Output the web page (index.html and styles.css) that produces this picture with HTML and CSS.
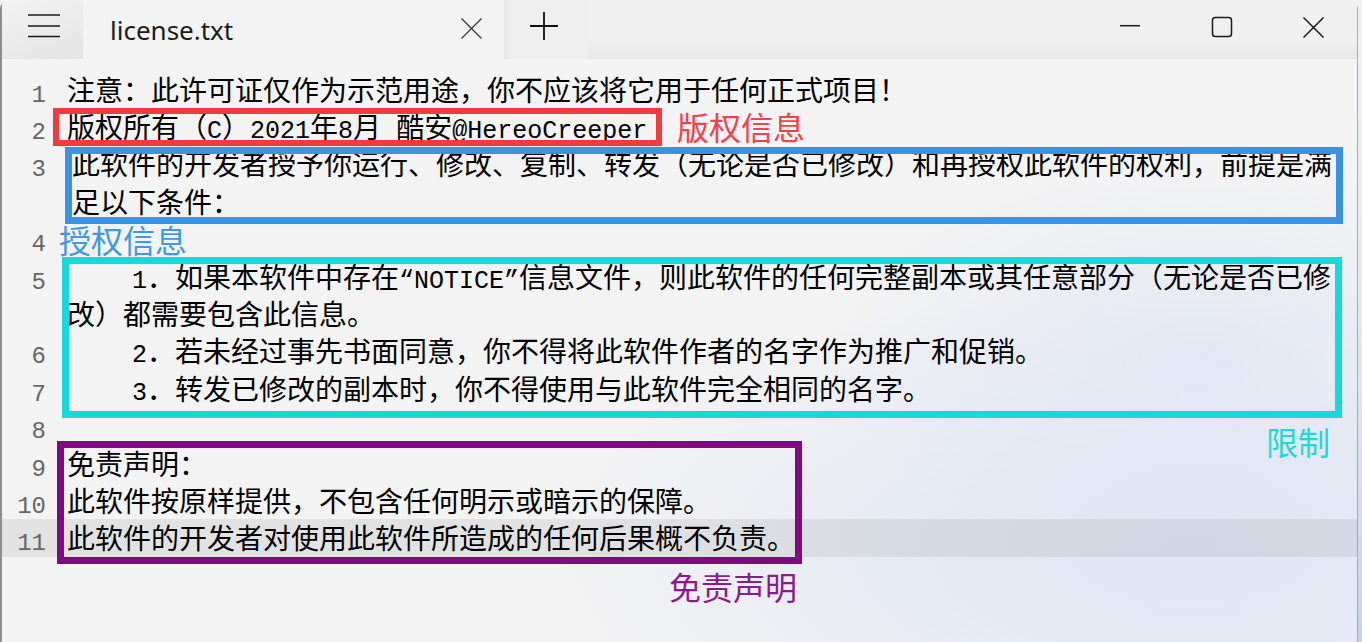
FILE: index.html
```html
<!DOCTYPE html>
<html lang="zh-CN">
<head>
<meta charset="utf-8">
<title>license.txt</title>
<link rel="stylesheet" href="styles.css">
</head>
<body>
<div class="window">
  <header class="titlebar">
    <div class="menu-btn">
      <svg width="32" height="32" viewBox="0 0 32 32"><path d="M0 5H32M0 16H32M0 26.5H32" stroke="#1b1b1b" stroke-width="1.5" fill="none"/></svg>
    </div>
    <div class="tab">
      <span class="tab-title">license.txt</span>
      <svg class="tab-close" width="21" height="21" viewBox="0 0 21 21"><path d="M0.5 0.5L20.5 20.5M20.5 0.5L0.5 20.5" stroke="#3a3a3a" stroke-width="1.3" fill="none"/></svg>
    </div>
    <div class="new-tab">
      <svg width="28" height="28" viewBox="0 0 28 28"><path d="M14 0V28M0 14H28" stroke="#111" stroke-width="1.8" fill="none"/></svg>
    </div>
    <div class="drag"></div>
    <div class="cap-btn">
      <svg width="26" height="22" viewBox="0 0 26 22"><path d="M4 9.7H24" stroke="#1b1b1b" stroke-width="1.5" fill="none"/></svg>
    </div>
    <div class="cap-btn">
      <svg width="26" height="22" viewBox="0 0 26 22"><rect x="4.5" y="1.5" width="19" height="19" rx="2.8" stroke="#1b1b1b" stroke-width="1.5" fill="none"/></svg>
    </div>
    <div class="cap-btn">
      <svg width="26" height="22" viewBox="0 0 26 22"><path d="M3.5 1.5L23.5 21.5M23.5 1.5L3.5 21.5" stroke="#1b1b1b" stroke-width="1.5" fill="none"/></svg>
    </div>
  </header>

  <main class="editor">
    <div class="lines">
      <div class="line"><span class="ln">1</span><p class="txt">注意：此许可证仅作为示范用途，你不应该将它用于任何正式项目！</p></div>
      <div class="line"><span class="ln">2</span><p class="txt">版权所有（<span class="m">C</span>）<span class="m">2021</span>年<span class="m">8</span>月<span class="m"> </span>酷安<span class="m">@HereoCreeper</span></p></div>
      <div class="line"><span class="ln">3</span><p class="txt shift">此软件的开发者授予你运行、修改、复制、转发（无论是否已修改）和再授权此软件的权利，前提是满足以下条件：</p></div>
      <div class="line"><span class="ln">4</span><p class="txt"><br></p></div>
      <div class="line"><span class="ln">5</span><p class="txt"><span class="ind"></span><span class="m">1</span>．如果本软件中存在<span class="m">“NOTICE”</span>信息文件，则此软件的任何完整副本或其任意部分（无论是否已修改）都需要包含此信息。</p></div>
      <div class="line"><span class="ln">6</span><p class="txt"><span class="ind"></span><span class="m">2</span>．若未经过事先书面同意，你不得将此软件作者的名字作为推广和促销。</p></div>
      <div class="line"><span class="ln">7</span><p class="txt"><span class="ind"></span><span class="m">3</span>．转发已修改的副本时，你不得使用与此软件完全相同的名字。</p></div>
      <div class="line"><span class="ln">8</span><p class="txt"><br></p></div>
      <div class="line"><span class="ln">9</span><p class="txt">免责声明：</p></div>
      <div class="line"><span class="ln">10</span><p class="txt">此软件按原样提供，不包含任何明示或暗示的保障。</p></div>
      <div class="line current"><span class="ln">11</span><p class="txt">此软件的开发者对使用此软件所造成的任何后果概不负责。</p></div>
    </div>

    <div class="box box-red"></div>
    <div class="box box-blue"></div>
    <div class="box box-cyan"></div>
    <div class="box box-purple"></div>

    <span class="label label-red">版权信息</span>
    <span class="label label-blue">授权信息</span>
    <span class="label label-cyan">限制</span>
    <span class="label label-purple">免责声明</span>
  </main>
</div>
</body>
</html>
```

FILE: styles.css
```css
* { box-sizing: border-box; }

html, body {
  margin: 0;
  padding: 0;
}

body {
  width: 1362px;
  height: 642px;
  overflow: hidden;
  background: linear-gradient(#f2f2f2 0%, #e4e7ee 55%, #c8d2ea 100%);
  font-family: "Noto Sans", sans-serif;
}

.window {
  position: relative;
  width: 1358px;
  height: 642px;
  display: flex;
  flex-direction: column;
  border-radius: 9px 9px 0 0;
  overflow: hidden;
  background: #f3f3f3;
}

.window::before,
.window::after {
  content: "";
  position: absolute;
  top: 0;
  bottom: 0;
  z-index: 5;
  pointer-events: none;
}

.window::before {
  left: 0;
  width: 2px;
  background: #8d8d8d;
  border-top-left-radius: 9px;
}

.window::after {
  right: 0;
  width: 1px;
  background: #a9a9a9;
}

/* ---------- title bar ---------- */
.titlebar {
  flex: none;
  height: 59px;
  display: flex;
  background: linear-gradient(#f0f0f0 68%, #e7e7e7 100%);
}

.menu-btn {
  flex: none;
  width: 83px;
  padding: 10px 0 0 28px;
  background: linear-gradient(160deg, #f2f2f2 0%, #e8e8e8 70%, #e3e3e3 100%);
}

.menu-btn svg,
.new-tab svg,
.cap-btn svg {
  display: block;
}

.tab {
  flex: none;
  width: 421px;
  display: flex;
  align-items: center;
  justify-content: space-between;
  padding: 0 22px 0 27px;
  background: #f3f3f3;
}

.tab-title {
  font-family: "Noto Sans", "Open Sans", sans-serif;
  font-size: 26px;
  line-height: 26px;
  color: #1b1b1b;
}

.tab-close {
  display: block;
  margin-top: -2px;
}

.new-tab {
  flex: none;
  width: 84px;
  padding: 12px 0 0 26px;
  background: linear-gradient(90deg, #e6e6e6 0%, #efefef 10%, #efefef 100%);
}

.drag {
  flex: 1;
}

.cap-btn {
  flex: none;
  width: 92px;
  padding: 16px 0 0 34px;
}

/* ---------- editor ---------- */
.editor {
  position: relative;
  flex: 1;
  overflow: hidden;
  padding-top: 11.5px;
  background:
    radial-gradient(ellipse 640px 270px at 1190px 490px, #e0e6f3 0%, rgba(224, 230, 243, 0.75) 40%, rgba(243, 243, 243, 0) 100%),
    radial-gradient(ellipse 380px 200px at 1200px 300px, rgba(226, 231, 243, 0.9) 0%, rgba(243, 243, 243, 0) 100%),
    #f3f3f3;
}

.line {
  display: flex;
  align-items: flex-start;
}

.line.current {
  background: rgba(0, 0, 0, 0.065);
}

.ln {
  flex: none;
  width: 46px;
  height: 37.4px;
  margin-right: 21px;
  text-align: right;
  font-family: "Liberation Mono", monospace;
  font-size: 24px;
  line-height: 49px;
  color: #666666;
}

.txt {
  margin: 0;
  width: 1278px;
  font-family: "Noto Sans CJK SC", "Noto Sans", sans-serif;
  font-size: 28px;
  line-height: 37.4px;
  color: #000;
  white-space: pre-wrap;
  text-spacing-trim: space-all;
}

.txt.shift {
  padding-left: 5px;
}

.m {
  font-family: "Liberation Mono", monospace;
  font-size: 25px;
  line-height: 1;
}

.ind {
  display: inline-block;
  width: 65px;
}

/* ---------- annotations ---------- */
.box {
  position: absolute;
  border-style: solid;
  pointer-events: none;
}

.box-red {
  left: 53px;
  top: 49px;
  width: 609px;
  height: 38px;
  border-width: 6px;
  border-color: #f23b3f;
}

.box-blue {
  left: 65px;
  top: 88px;
  width: 1278px;
  height: 77px;
  border-width: 7px;
  border-color: #3993e1;
}

.box-cyan {
  left: 62px;
  top: 198px;
  width: 1280px;
  height: 161px;
  border-width: 7px;
  border-color: #14dada;
}

.box-purple {
  left: 57px;
  top: 382px;
  width: 745px;
  height: 123px;
  border-width: 7px;
  border-color: #820a81;
}

.label {
  position: absolute;
  font-family: "Noto Sans CJK SC", sans-serif;
  font-size: 32px;
  line-height: 1;
  white-space: nowrap;
}

.label-red {
  left: 677px;
  top: 51px;
  color: #f3424a;
}

.label-blue {
  left: 59px;
  top: 164px;
  color: #3f98e4;
}

.label-cyan {
  left: 1266px;
  top: 366px;
  color: #22d8d5;
}

.label-purple {
  left: 669px;
  top: 511px;
  color: #8b1b8a;
}
```
